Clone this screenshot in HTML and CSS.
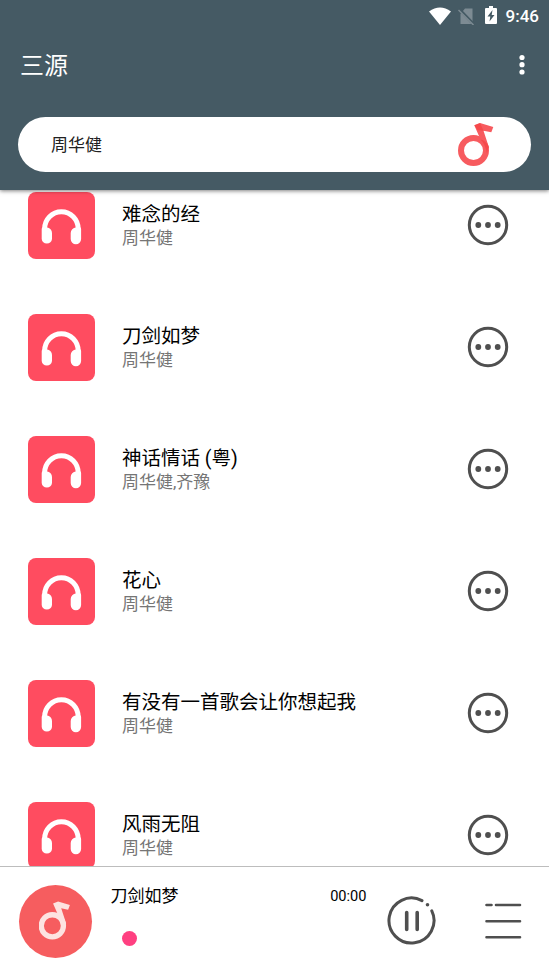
FILE: index.html
```
<!DOCTYPE html>
<html lang="zh-CN">
<head>
<meta charset="utf-8">
<title>三源</title>
<link rel="stylesheet" href="styles.css">
</head>
<body>
<svg width="0" height="0" class="defs">
  <symbol id="headphones" viewBox="0 0 67 67">
    <path d="M16.600 41V37a16.800 17.200 0 0 1 33.600 0v4" fill="none" stroke="#fff" stroke-width="5"/>
    <path d="M14.100 35.500H19a5.500 5.500 0 0 1 5 5.500V47a5.200 5.200 0 0 1-10.300 0V37ZM52.700 35.500H48a5.500 5.500 0 0 0-5.300 5.500V47a5.200 5.200 0 0 0 10.400 0V37Z" fill="#fff"/>
  </symbol>
  <symbol id="more" viewBox="0 0 42 42">
    <circle cx="21" cy="21" r="18.700" fill="none" stroke="#4f4f4f" stroke-width="3"/>
    <g fill="#4f4f4f"><circle cx="11.300" cy="21" r="2.900"/><circle cx="21" cy="21" r="2.900"/><circle cx="30.700" cy="21" r="2.900"/></g>
  </symbol>
</svg>
<div class="screen">
  <header class="header">
    <div class="status">
      <svg class="wifi" width="22" height="18" viewBox="0 0 22 18"><path d="M0 4.500Q11-3.500 22 4.500L11 18Z" fill="#fff"/></svg>
      <svg class="sim" width="17" height="17" viewBox="0 0 17 17"><path d="M2.500 6L7 .5H14.500V16H2.500Z" fill="#7d8b93"/><path d="M1 1L16 16.500" stroke="#455a64" stroke-width="3"/><path d="M.5 2L15.500 17" stroke="#7d8b93" stroke-width="1.500"/></svg>
      <svg class="battery" width="12" height="18" viewBox="0 0 12 18"><path d="M4 0H8V2H11Q12 2 12 3V17Q12 18 11 18H1Q0 18 0 17V3Q0 2 1 2H4Z" fill="#fff"/><path d="M7.500 4L2.500 10.500H5.300L4.500 15.500L9.500 9H6.700Z" fill="#455a64"/></svg>
      <span class="clock">9:46</span>
    </div>
    <div class="toolbar">
      <h1>三源</h1>
      <svg width="6" height="22" viewBox="0 0 6 22" fill="#fff"><circle cx="3" cy="3.500" r="2.600"/><circle cx="3" cy="10.700" r="2.600"/><circle cx="3" cy="18" r="2.600"/></svg>
    </div>
    <div class="search">
      <span>周华健</span>
      <svg class="search-note" width="36" height="44" viewBox="0 0 36 44"><circle cx="15.500" cy="27.500" r="12.500" fill="none" stroke="#f75b5f" stroke-width="6"/><path d="M16.300 2.200L22 0L35.300 4L33.300 9.300L25.500 7.700L31 24.500L29 30.500L22.500 16.500Z" fill="#f75b5f"/><path d="M16.300 2.200L22 0L25.500 7.700L19.500 7ZM22.500 16.500Q28 17.500 30.500 23.500L29 30.500Q27 20.500 22.500 16.500Z" fill="#f53e3e" opacity=".6"/></svg>
    </div>
  </header>
  <main class="list">
    <div class="row"><div class="tile"><svg><use href="#headphones"/></svg></div><div class="text"><div class="title">难念的经</div><div class="artist">周华健</div></div><svg class="more"><use href="#more"/></svg></div>
    <div class="row"><div class="tile"><svg><use href="#headphones"/></svg></div><div class="text"><div class="title">刀剑如梦</div><div class="artist">周华健</div></div><svg class="more"><use href="#more"/></svg></div>
    <div class="row"><div class="tile"><svg><use href="#headphones"/></svg></div><div class="text"><div class="title">神话情话 (粤)</div><div class="artist">周华健,齐豫</div></div><svg class="more"><use href="#more"/></svg></div>
    <div class="row"><div class="tile"><svg><use href="#headphones"/></svg></div><div class="text"><div class="title">花心</div><div class="artist">周华健</div></div><svg class="more"><use href="#more"/></svg></div>
    <div class="row"><div class="tile"><svg><use href="#headphones"/></svg></div><div class="text"><div class="title">有没有一首歌会让你想起我</div><div class="artist">周华健</div></div><svg class="more"><use href="#more"/></svg></div>
    <div class="row"><div class="tile"><svg><use href="#headphones"/></svg></div><div class="text"><div class="title">风雨无阻</div><div class="artist">周华健</div></div><svg class="more"><use href="#more"/></svg></div>
  </main>
  <footer class="player">
    <div class="cover"><svg width="32" height="39" viewBox="0 0 36 44"><circle cx="15" cy="28" r="12.500" fill="none" stroke="#fde3e1" stroke-width="6"/><path d="M15.800 2.700L21.500 .5L34.800 4.500L32.800 9.800L25 8.200L30.500 25L28.500 31L22 17Z" fill="#fde3e1"/></svg></div>
    <div class="progress">
      <div class="now"><span class="song">刀剑如梦</span><span class="time">00:00</span></div>
      <div class="thumb"></div>
    </div>
    <svg class="pause" width="50" height="50" viewBox="0 0 50 50" fill="none" stroke="#4f4f4f" stroke-width="3" stroke-linecap="round"><path d="M35 4.600A22.500 22.500 0 1 0 44.800 14.800"/><path d="M19.700 16.500V33.500M30.200 16.500V33.500" stroke-width="3.600"/><circle cx="40.500" cy="8.800" r="1.800" fill="#4f4f4f" stroke="none"/></svg>
    <svg class="menu" width="38" height="38" viewBox="0 0 38 38" fill="none" stroke="#4f4f4f" stroke-width="2.600" stroke-linecap="round"><path d="M2.500 3H7.500M12 3H36M2.500 19.300H36M2.500 35.200H36"/></svg>
  </footer>
</div>
</body>
</html>
```
FILE: styles.css
```
* { box-sizing: border-box; }
body {
  margin: 0;
  background: #fff;
  font-family: Roboto, "Noto Sans CJK SC", sans-serif;
  color: #000;
}
svg { display: block; flex: none; }
.defs { position: absolute; }
.screen {
  width: 549px;
  height: 976px;
  display: flex;
  flex-direction: column;
  overflow: hidden;
}
.header {
  flex: none;
  height: 190px;
  background: #455a64;
  box-shadow: 0 1px 4px rgba(0, 0, 0, .5);
  z-index: 1;
}
.status {
  height: 32px;
  display: flex;
  justify-content: flex-end;
  align-items: center;
  padding-right: 10px;
  color: #fff;
}
.sim { margin-left: 7px; }
.battery { margin: -2px 9px 0 10px; }
.clock { font-size: 17px; font-weight: 500; line-height: 32px; }
.toolbar {
  height: 66px;
  display: flex;
  justify-content: space-between;
  align-items: center;
  padding: 0 24px 0 20px;
  color: #fff;
}
h1 { margin: 0; padding-top: 2px; font-size: 24px; font-weight: 400; line-height: 36px; }
.search {
  height: 55px;
  margin: 19px 18px 0;
  padding: 0 37px 0 33px;
  border-radius: 28px;
  background: #fff;
  display: flex;
  justify-content: space-between;
  align-items: center;
  font-size: 17px;
  color: #212121;
}
.search span { padding-bottom: 2px; }
.list { flex: 1; min-height: 0; padding-top: 2px; overflow: hidden; }
.row { height: 122px; display: flex; align-items: flex-start; padding: 0 40px 0 28px; }
.tile { width: 67px; height: 67px; border-radius: 8px; background: #ff4c60; }
.tile svg { width: 67px; height: 67px; }
.text { flex: 1; padding: 9px 0 0 27px; white-space: nowrap; }
.title { font-size: 19.500px; line-height: 28px; }
.artist { margin-top: -2px; font-size: 17px; line-height: 22px; color: #757575; }
.more { width: 42px; height: 42px; margin-top: 12px; }
.player {
  flex: none;
  height: 110px;
  border-top: 1px solid #bdbdbd;
  padding: 0 27px 0 18px;
  display: flex;
  background: #fff;
}
.cover {
  width: 73px;
  height: 73px;
  margin: 18px 0 0 .5px;
  padding-bottom: 2px;
  border-radius: 50%;
  background: #f65d5f;
  display: flex;
  align-items: center;
  justify-content: center;
}
.search-note { overflow: visible; }
.progress { width: 256px; margin-left: 19px; padding-top: 17px; }
.now { display: flex; justify-content: space-between; line-height: 25px; }
.song { font-size: 17px; }
.time { font-size: 14.600px; }
.thumb { width: 15px; height: 15px; margin: 22px 0 0 11px; border-radius: 50%; background: #ff4081; }
.pause { margin: 29px 0 0 20.500px; }
.menu { margin: 35px 0 0 auto; }
```
